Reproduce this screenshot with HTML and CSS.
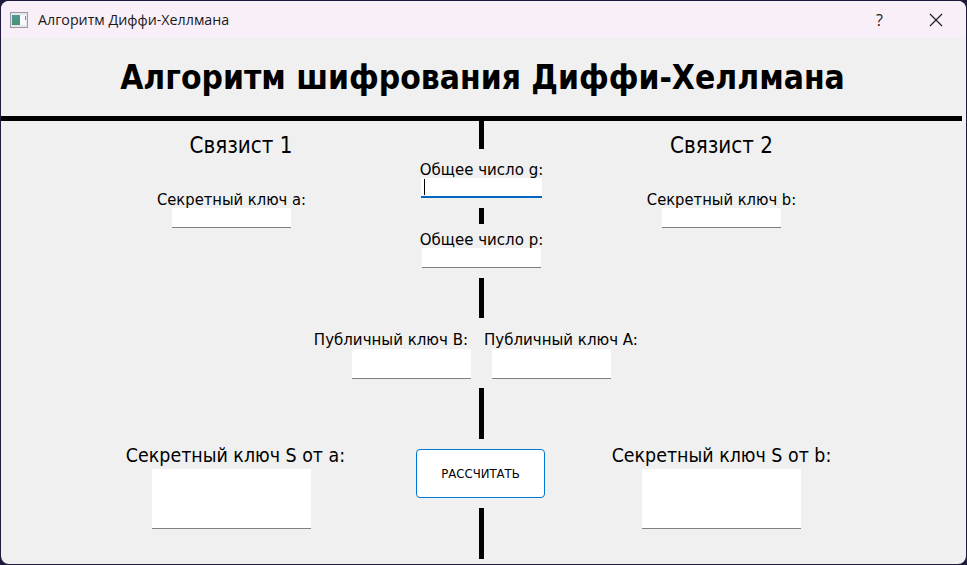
FILE: index.html
```html
<!DOCTYPE html>
<html lang="en">
<head>
  <meta charset="UTF-8">
  <meta name="viewport" content="width=device-width, initial-scale=1.0">
  <title>Алгоритм Диффи-Хеллмана</title>
  <link rel="stylesheet" href="styles.css">
</head>
<body>

  <div class="window">
    <div class="titlebar">
      <svg class="app-icon" width="18" height="16" viewBox="0 0 18 16">
        <defs>
          <linearGradient id="iconFill" x1="0" y1="0" x2="0" y2="1">
            <stop offset="0" stop-color="#4f9a9a"/>
            <stop offset="1" stop-color="#4a8f6c"/>
          </linearGradient>
        </defs>
        <rect x="0.5" y="0.5" width="17" height="15" fill="#e6e6ec" stroke="#9a9aa2"/>
        <rect x="2" y="3" width="8" height="10" fill="url(#iconFill)"/>
        <rect x="10" y="3" width="6" height="10" fill="#f8f8fa"/>
        <rect x="15" y="4" width="1" height="4" fill="#5aa0a0"/>
      </svg>
      <span class="title-text">Алгоритм Диффи-Хеллмана</span>
      <span class="help-btn">?</span>
      <svg class="close-btn" width="14" height="14" viewBox="0 0 14 14">
        <path d="M1 1 L13 13 M13 1 L1 13" stroke="#1a1a1a" stroke-width="1.1" fill="none"/>
      </svg>
    </div>

    <h1 class="heading">Алгоритм шифрования Диффи-Хеллмана</h1>
    <div class="rule"></div>

    <div class="content">
      <div class="side">
        <h2 class="side-title side-title-left">Связист 1</h2>
        <div class="field field-secret">
          <label>Секретный ключ a:</label>
          <div class="input"></div>
        </div>
        <div class="field field-result">
          <label class="label-big label-left">Секретный ключ S от a:</label>
          <div class="input input-big"></div>
        </div>
      </div>

      <div class="center">
        <div class="seg seg-1"></div>
        <div class="field field-g">
          <label>Общее число g:</label>
          <div class="input input-focus"><span class="caret"></span></div>
        </div>
        <div class="seg seg-2"></div>
        <div class="field field-p">
          <label>Общее число p:</label>
          <div class="input"></div>
        </div>
        <div class="seg seg-3"></div>
        <div class="public-row">
          <div class="field field-pub-b">
            <label>Публичный ключ B:</label>
            <div class="input input-pub"></div>
          </div>
          <div class="field field-pub-a">
            <label>Публичный ключ A:</label>
            <div class="input input-pub"></div>
          </div>
        </div>
        <div class="seg seg-4"></div>
        <button class="calc-btn" type="button">РАССЧИТАТЬ</button>
        <div class="seg seg-5"></div>
      </div>

      <div class="side">
        <h2 class="side-title">Связист 2</h2>
        <div class="field field-secret">
          <label>Секретный ключ b:</label>
          <div class="input"></div>
        </div>
        <div class="field field-result">
          <label class="label-big">Секретный ключ S от b:</label>
          <div class="input input-big"></div>
        </div>
      </div>
    </div>
  </div>

</body>
</html>
```

FILE: styles.css
```css
* {
  box-sizing: border-box;
}
html, body {
  height: 100%;
}
body {
  margin: 0;
  overflow: hidden;
  background: #1e1b3c;
  font-family: "DejaVu Sans", sans-serif;
  font-stretch: condensed;
  color: #000;
}
.window {
  display: flex;
  flex-direction: column;
  height: 563px;
  margin: 1px 0 0 1px;
  width: 965px;
  background: #f0f0f0;
  border-radius: 8px;
  overflow: hidden;
}
.titlebar {
  display: flex;
  align-items: center;
  flex: none;
  height: 37px;
  padding-left: 9px;
  background: #f9eff8;
}
.app-icon {
  flex: none;
}
.title-text {
  margin-left: 10px;
  font-family: "Open Sans", sans-serif;
  font-stretch: normal;
  font-size: 14.25px;
  color: #1a1a1a;
}
.help-btn {
  margin-left: auto;
  font-family: "Open Sans", sans-serif;
  font-stretch: normal;
  font-size: 16px;
  color: #1a1a1a;
}
.close-btn {
  flex: none;
  margin: 0 23px 0 46px;
}
.heading {
  flex: none;
  height: 78px;
  margin: 0;
  padding-right: 2px;
  line-height: 80px;
  font-size: 33.3px;
  font-weight: bold;
  text-align: center;
}
.rule {
  flex: none;
  height: 5px;
  margin-right: 4px;
  background: #000;
}
.content {
  display: grid;
  grid-template-columns: 319px 181px 299px;
  flex: 1;
  padding-left: 71px;
  min-height: 0;
}
.side {
  display: flex;
  flex-direction: column;
  align-items: center;
}
.side-title {
  margin: 11px 0 0;
  font-size: 22.2px;
  line-height: 26px;
  font-weight: normal;
  white-space: nowrap;
}
.side-title-left {
  margin-left: 19px;
}
.field {
  display: flex;
  flex-direction: column;
  align-items: center;
}
.field label {
  font-size: 16.4px;
  line-height: 16px;
  white-space: nowrap;
}
.field-secret {
  margin-top: 34px;
}
.field-result {
  margin-top: auto;
  margin-bottom: 35px;
}
.field .label-big {
  font-size: 19.4px;
  line-height: 26px;
}
.label-left {
  margin-left: 8px;
}
.input {
  flex: none;
  width: 119px;
  height: 20px;
  background: #fff;
  border-bottom: 1px solid #808080;
}
.input-big {
  width: 159px;
  height: 60px;
}
.input-pub {
  height: 30px;
}
.input-focus {
  display: flex;
  align-items: center;
  width: 121px;
  padding-left: 3px;
  border-bottom: 2px solid #0067c0;
}
.caret {
  width: 1px;
  height: 16px;
  background: #000;
}
.center {
  display: flex;
  flex-direction: column;
  align-items: center;
}
.center .field label {
  font-size: 16.7px;
  line-height: 18px;
}
.seg {
  flex: none;
  width: 5px;
  background: #000;
}
.seg-1 {
  height: 28px;
}
.seg-2 {
  height: 16px;
  margin-top: 10px;
}
.seg-3 {
  height: 40px;
  margin-top: 10px;
}
.seg-4 {
  height: 51px;
  margin-top: 9px;
}
.seg-5 {
  height: 51px;
  margin-top: 10px;
}
.field-g {
  margin-top: 11px;
}
.field-p {
  margin-top: 6px;
}
.public-row {
  display: flex;
  flex: none;
  gap: 21px;
  margin-top: 11px;
}
.field-pub-b, .field-pub-a {
  width: 119px;
}
.center .field-pub-b label, .center .field-pub-a label {
  line-height: 20px;
}
.field-pub-b {
  align-items: flex-end;
}
.field-pub-b label {
  margin-right: 3px;
}
.field-pub-a {
  align-items: flex-start;
}
.field-pub-a label {
  margin-left: -8px;
}
.calc-btn {
  flex: none;
  width: 129px;
  height: 49px;
  margin: 10px 2px 0 0;
  background: #fff;
  border: 1px solid #0078d4;
  border-radius: 4px;
  font-family: "DejaVu Sans", sans-serif;
  font-stretch: condensed;
  font-size: 13px;
  color: #000;
}
```
